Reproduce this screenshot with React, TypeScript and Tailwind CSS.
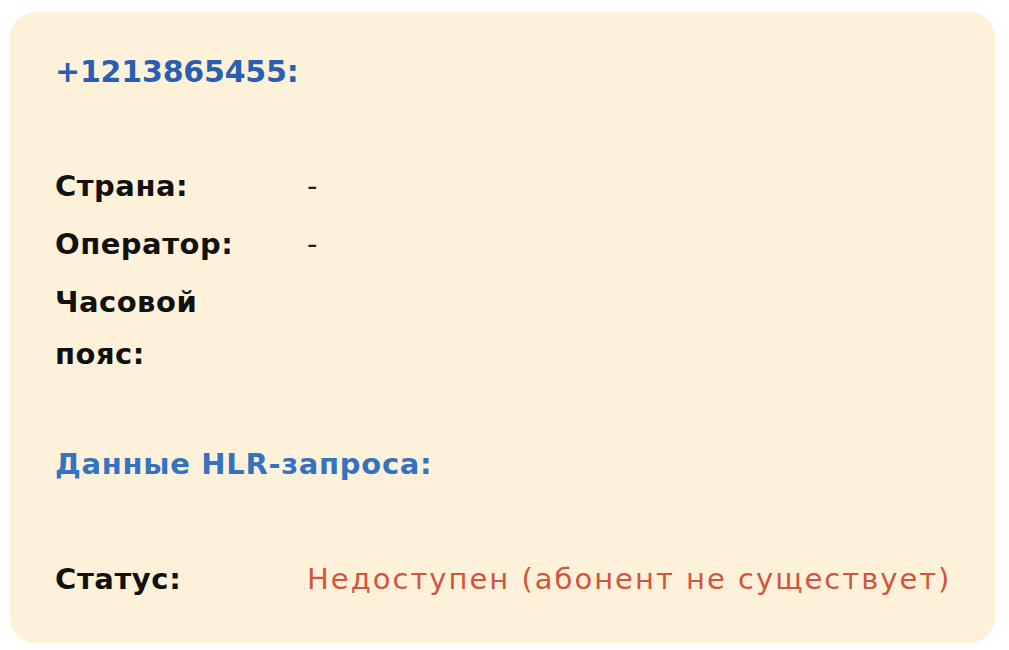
export default function App() {
  const rows = [
    { label: 'Страна:', value: '-' },
    { label: 'Оператор:', value: '-' },
    { label: 'Часовой пояс:', value: '' },
  ];

  return (
    <div className="min-h-screen bg-white pt-[12px] pl-[10px] font-['DejaVu_Sans',sans-serif]">
      <div className="w-[985px] h-[631px] rounded-[26px] bg-[#fdf2d9] pl-[45px] pr-[40px] pt-[38px]">
        <h1 className="text-[30px] leading-[44px] font-bold tracking-[-0.2px] text-[#2a5eb2]">+1213865455:</h1>

        <div className="mt-[66px] flex flex-col gap-[6px]">
          {rows.map((r) => (
            <div key={r.label} className="flex">
              <div className="w-[252px] pr-[24px] text-[29px] leading-[52px] font-bold tracking-[0.5px] text-[#111]">
                {r.label}
              </div>
              <div className="text-[29px] leading-[52px] text-[#222]">{r.value}</div>
            </div>
          ))}
        </div>

        <h2 className="mt-[62px] text-[29px] leading-[44px] font-bold tracking-[0.7px] text-[#3572c2]">
          Данные HLR-запроса:
        </h2>

        <div className="mt-[67px] flex">
          <div className="w-[252px] text-[29px] leading-[52px] font-bold tracking-[0.6px] text-[#111]">Статус:</div>
          <div className="text-[29px] leading-[52px] tracking-[2px] text-[#d2553e]">
            Недоступен (абонент не существует)
          </div>
        </div>
      </div>
    </div>
  );
}
